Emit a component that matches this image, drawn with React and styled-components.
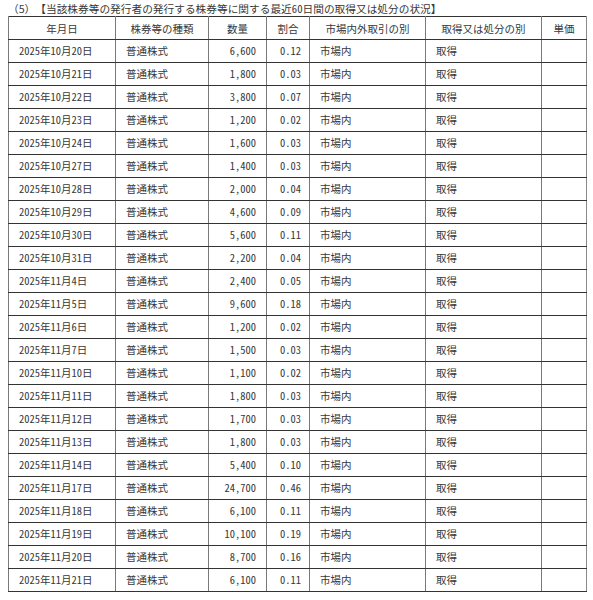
import styled, { createGlobalStyle } from 'styled-components';

const rows = [
  ['2025年10月20日', '6,600', '0.12'],
  ['2025年10月21日', '1,800', '0.03'],
  ['2025年10月22日', '3,800', '0.07'],
  ['2025年10月23日', '1,200', '0.02'],
  ['2025年10月24日', '1,600', '0.03'],
  ['2025年10月27日', '1,400', '0.03'],
  ['2025年10月28日', '2,000', '0.04'],
  ['2025年10月29日', '4,600', '0.09'],
  ['2025年10月30日', '5,600', '0.11'],
  ['2025年10月31日', '2,200', '0.04'],
  ['2025年11月4日', '2,400', '0.05'],
  ['2025年11月5日', '9,600', '0.18'],
  ['2025年11月6日', '1,200', '0.02'],
  ['2025年11月7日', '1,500', '0.03'],
  ['2025年11月10日', '1,100', '0.02'],
  ['2025年11月11日', '1,800', '0.03'],
  ['2025年11月12日', '1,700', '0.03'],
  ['2025年11月13日', '1,800', '0.03'],
  ['2025年11月14日', '5,400', '0.10'],
  ['2025年11月17日', '24,700', '0.46'],
  ['2025年11月18日', '6,100', '0.11'],
  ['2025年11月19日', '10,100', '0.19'],
  ['2025年11月20日', '8,700', '0.16'],
  ['2025年11月21日', '6,100', '0.11'],
];

const columns = [
  { title: '年月日', width: 107 },
  { title: '株券等の種類', width: 93 },
  { title: '数量', width: 58 },
  { title: '割合', width: 43 },
  { title: '市場内外取引の別', width: 116 },
  { title: '取得又は処分の別', width: 116 },
  { title: '単価', width: 45 },
];

export default function App() {
  return (
    <>
      <GlobalStyle />
      <Page>
        <Title>
          （5）【当該株券等の発行者の発行する株券等に関する最近<Half>60</Half>日間の取得又は処分の状況】
        </Title>
        <Table>
          <colgroup>
            {columns.map((c) => (
              <col key={c.title} style={{ width: c.width }} />
            ))}
          </colgroup>
          <thead>
            <Row>
              {columns.map((c) => (
                <HeadCell key={c.title}>{c.title}</HeadCell>
              ))}
            </Row>
          </thead>
          <tbody>
            {rows.map(([date, qty, ratio]) => (
              <Row key={date}>
                <Cell>{date}</Cell>
                <Cell>普通株式</Cell>
                <Cell align="right">{qty}</Cell>
                <Cell align="right" pad={8}>{ratio}</Cell>
                <Cell>市場内</Cell>
                <Cell>取得</Cell>
                <Cell />
              </Row>
            ))}
          </tbody>
        </Table>
      </Page>
    </>
  );
}

const GlobalStyle = createGlobalStyle`
  body {
    margin: 0;
    background: #fff;
    color: #383838;
    font-family: "Noto Sans CJK JP", "Noto Sans", sans-serif;
    text-spacing-trim: space-all;
  }
`;

const Page = styled.div`
  padding: 1px 6px 0 8px;
`;

const Title = styled.div`
  font-size: 10.7px;
  line-height: 15px;
  height: 15px;
  white-space: nowrap;
  text-spacing-trim: space-all;
`;

const Half = styled.span`
  font-feature-settings: "hwid";
`;

const Table = styled.table`
  border-collapse: collapse;
  table-layout: fixed;
  width: 579px;
  font-size: 10.5px;
  font-feature-settings: "hwid";
  border-top: 1px solid #333;
  border-bottom: 1px solid #8a8a8a;
  border-left: 1px solid #555;
  border-right: 1px solid #8a8a8a;
`;

const Row = styled.tr`
  height: 23px;
`;

const HeadCell = styled.th`
  font-weight: normal;
  text-align: center;
  padding: 0;
  border-bottom: 1px solid #333;
  border-left: 1px solid #7a7a7a;
  white-space: nowrap;
`;

const Cell = styled.td`
  text-align: ${(p) => p.align || 'left'};
  padding: ${(p) =>
    p.align === 'right' ? `0 ${p.pad ?? 10}px 0 0` : '0 0 0 10px'};
  border-bottom: 1px solid #333;
  border-left: 1px solid #7a7a7a;
  white-space: nowrap;
  line-height: 14px;
`;
